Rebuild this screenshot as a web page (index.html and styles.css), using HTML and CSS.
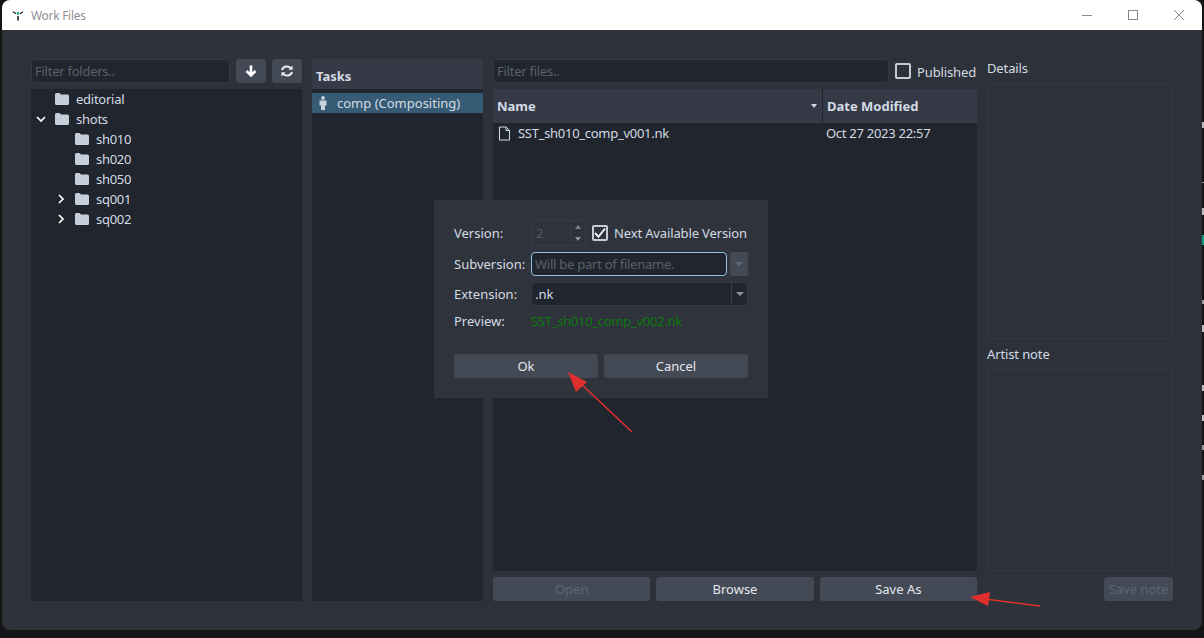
FILE: index.html
```html
<!DOCTYPE html>
<html lang="en">
<head>
<meta charset="utf-8">
<title>Work Files</title>
<link rel="stylesheet" href="styles.css">
</head>
<body>
<div class="window">
  <header class="titlebar">
    <svg class="logo" viewBox="0 0 12 12" width="12" height="12"><circle cx="6" cy="4.400" r="1.300" fill="#1ba58c"/><path d="M6 7v4.500" stroke="#222" stroke-width="1.600" fill="none"/><path d="M1 2.800l3 2M11 2.800l-3 2" stroke="#222" stroke-width="1.300" fill="none"/></svg>
    <span class="title">Work Files</span>
    <div class="winctl">
      <svg viewBox="0 0 12 12" width="12" height="12"><path d="M1 6.500h10" stroke="#8a8a8a" fill="none"/></svg>
      <svg viewBox="0 0 12 12" width="12" height="12"><rect x="1.500" y="1.500" width="9" height="9" stroke="#8a8a8a" fill="none"/></svg>
      <svg viewBox="0 0 12 12" width="12" height="12"><path d="M1 1l10 10M11 1L1 11" stroke="#8a8a8a" fill="none"/></svg>
    </div>
  </header>
  <main class="content">
    <section class="col-folders">
      <div class="row-top">
        <div class="input grow ph tight">Filter folders..</div>
        <button class="btn icon-btn"><svg viewBox="0 0 14 14" width="14" height="14"><path d="M7 1.500v10M2.500 7L7 11.500 11.500 7" stroke="#fff" stroke-width="2.600" fill="none"/></svg></button>
        <button class="btn icon-btn"><svg viewBox="0 0 14 14" width="14" height="14"><path d="M2 6a5 4.600 0 0 1 9-1.600M12 8a5 4.600 0 0 1-9 1.600" stroke="#e8eaee" stroke-width="2" fill="none"/><path d="M12.600 1.600v4.200H8.400zM1.400 12.400V8.200h4.200z" fill="#e8eaee"/></svg></button>
      </div>
      <div class="tree tight">
        <div class="node d0"><span class="arrow"></span><svg class="folder" viewBox="0 0 14 12" width="14" height="12"><use href="#fld"/></svg><span>editorial</span></div>
        <div class="node d0"><svg class="arrow" viewBox="0 0 12 12" width="12" height="12"><path d="M2 4l4 4 4-4" stroke="#fff" stroke-width="1.700" fill="none"/></svg><svg class="folder" viewBox="0 0 14 12" width="14" height="12"><use href="#fld"/></svg><span>shots</span></div>
        <div class="node d1"><span class="arrow"></span><svg class="folder" viewBox="0 0 14 12" width="14" height="12"><use href="#fld"/></svg><span class="num">sh010</span></div>
        <div class="node d1"><span class="arrow"></span><svg class="folder" viewBox="0 0 14 12" width="14" height="12"><use href="#fld"/></svg><span class="num">sh020</span></div>
        <div class="node d1"><span class="arrow"></span><svg class="folder" viewBox="0 0 14 12" width="14" height="12"><use href="#fld"/></svg><span class="num">sh050</span></div>
        <div class="node d1"><svg class="arrow" viewBox="0 0 12 12" width="12" height="12"><path d="M4 2l4 4-4 4" stroke="#fff" stroke-width="1.700" fill="none"/></svg><svg class="folder" viewBox="0 0 14 12" width="14" height="12"><use href="#fld"/></svg><span class="num">sq001</span></div>
        <div class="node d1"><svg class="arrow" viewBox="0 0 12 12" width="12" height="12"><path d="M4 2l4 4-4 4" stroke="#fff" stroke-width="1.700" fill="none"/></svg><svg class="folder" viewBox="0 0 14 12" width="14" height="12"><use href="#fld"/></svg><span class="num">sq002</span></div>
      </div>
    </section>

    <section class="col-tasks">
      <div class="tasks-head">Tasks</div>
      <div class="task-row">
        <svg viewBox="0 0 10 14" width="10" height="14"><circle cx="5" cy="2" r="1.900" fill="#c9d3dc"/><path d="M1.500 4.500h7v5H7V14H3V9.500H1.500z" fill="#c9d3dc"/></svg>
        <span>comp (Compositing)</span>
      </div>
    </section>

    <section class="col-files">
      <div class="row-top">
        <div class="input grow ph tight">Filter files..</div>
        <div class="published"><span class="check"></span><span class="tight-s">Published</span></div>
      </div>
      <div class="table">
        <div class="thead">
          <div class="th th-name">Name<span class="sort"></span></div>
          <div class="th th-date">Date Modified</div>
        </div>
        <div class="trow">
          <div class="td-name">
            <svg viewBox="0 0 13 15" width="13" height="15"><path d="M1.500 1h6.600L11.500 4.400V14h-10zM8 1v3.500h3.500" stroke="#cfe3df" fill="none"/></svg>
            <span class="num">SST_sh010_comp_v001.nk</span>
          </div>
          <div class="td-date num">Oct 27 2023 22:57</div>
        </div>
      </div>
      <div class="actions">
        <button class="btn off">Open</button>
        <button class="btn">Browse</button>
        <button class="btn">Save As</button>
      </div>
    </section>

    <section class="col-notes">
      <div class="lbl tight-s">Details</div>
      <div class="box box-details"></div>
      <div class="lbl lbl2 tight-s">Artist note</div>
      <div class="box box-note"></div>
      <div class="note-act"><button class="btn off save-note">Save note</button></div>
    </section>
  </main>

  <div class="dialog">
    <div class="form">
      <div class="flabel">Version:</div>
      <div class="fval version">
        <div class="spin"><span class="spin-v">2</span><span class="spin-btns"><i class="up"></i><i class="down"></i></span></div>
        <span class="check on"><svg viewBox="0 0 12 12" width="12" height="12"><path d="M1 6l3.500 3.800L11 1.500" stroke="#eef0f3" stroke-width="2" fill="none"/></svg></span>
        <span class="nav">Next Available Version</span>
      </div>
      <div class="flabel">Subversion:</div>
      <div class="fval sub">
        <div class="input focus grow ph tight">Will be part of filename.</div>
        <div class="combo-btn"><i class="down dim"></i></div>
      </div>
      <div class="flabel">Extension:</div>
      <div class="fval">
        <div class="input grow ext"><span class="grow">.nk</span><span class="ext-btn"><i class="down"></i></span></div>
      </div>
      <div class="flabel">Preview:</div>
      <div class="fval preview num">SST_sh010_comp_v002.nk</div>
    </div>
    <div class="dlg-btns">
      <button class="btn">Ok</button>
      <button class="btn">Cancel</button>
    </div>
  </div>

  <svg class="annot" viewBox="0 0 1204 638" width="1204" height="638">
    <path d="M632 432L578 381" stroke="#e0302e" stroke-width="1.600" fill="none"/>
    <path d="M568 372L587 382 576 392z" fill="#e0302e"/>
    <path d="M1040 606L985 599" stroke="#e0302e" stroke-width="1.600" fill="none"/>
    <path d="M970 597L990 592 988 606z" fill="#e0302e"/>
  </svg>
</div>
<svg class="defs" width="0" height="0"><defs><path id="fld" d="M0 1.500Q0 0 1.500 0h3L6 1.500h6.500Q14 1.500 14 3v7.500Q14 12 12.500 12h-11Q0 12 0 10.500z" fill="#c4cfdb"/></defs></svg>
</body>
</html>
```
FILE: styles.css
```css
* { box-sizing: border-box; }
html, body { margin: 0; height: 638px; overflow: hidden; }
body {
  position: relative;
  background-color: #141414;
  font-family: "Noto Sans", sans-serif;
  font-size: 13px;
  color: #d3dbe4;
  padding: 0 2px 8px;
}
/* slivers of the desktop showing past the window's right edge */
body::after {
  content: "";
  position: absolute;
  right: 0;
  top: 100px;
  width: 2px;
  height: 400px;
  background:
    linear-gradient(#17a085, #17a085) 0 135px / 2px 10px no-repeat,
    linear-gradient(#bbb, #bbb) 0 22px / 2px 6px no-repeat,
    linear-gradient(#999, #999) 0 82px / 2px 1px no-repeat,
    linear-gradient(#bbb, #bbb) 0 108px / 2px 7px no-repeat,
    linear-gradient(#999, #999) 0 200px / 2px 4px no-repeat,
    linear-gradient(#bbb, #bbb) 0 225px / 2px 7px no-repeat,
    linear-gradient(#bbb, #bbb) 0 285px / 2px 6px no-repeat,
    linear-gradient(#bbb, #bbb) 0 315px / 2px 6px no-repeat,
    linear-gradient(#999, #999) 0 345px / 2px 5px no-repeat,
    linear-gradient(#999, #999) 0 375px / 2px 5px no-repeat;
}
.defs { display: block; height: 0; }
.tight { letter-spacing: -0.25px; }
.tight-s { letter-spacing: -0.12px; }
.num { letter-spacing: -0.28px; }
.window {
  position: relative;
  height: 630px;
  background: #2d3139;
  border-radius: 8px;
  display: flex;
  flex-direction: column;
  overflow: hidden;
}
.titlebar {
  height: 30px;
  flex: none;
  background: #fff;
  display: flex;
  align-items: center;
  padding-left: 10px;
}
.logo { margin-right: 7px; }
.title { color: #8f8f96; font-size: 12px; letter-spacing: -0.3px; }
.winctl {
  margin-left: auto;
  display: flex;
  gap: 34px;
  padding-right: 17px;
}
.content {
  flex: 1;
  display: flex;
  gap: 10px;
  padding: 29px;
  min-height: 0;
}
.col-folders, .col-files, .col-notes, .col-tasks { display: flex; flex-direction: column; min-height: 0; }
.col-folders { width: 271px; }
.col-tasks { width: 171px; background: #21252d; }
.col-files { width: 484px; }
.col-notes { width: 186px; }
.row-top { display: flex; gap: 6px; height: 24px; flex: none; margin-bottom: 6px; }
.grow { flex: 1; min-width: 0; }
.input {
  background: #21252d;
  border: 1px solid #343944;
  border-radius: 4px;
  height: 24px;
  line-height: 22px;
  padding: 0 3px;
}
.ph { color: #5b616c; }
.btn {
  font: inherit;
  color: #e3e7ec;
  background: #434a56;
  border: 0;
  border-radius: 3px;
  height: 24px;
  padding: 0;
  display: flex;
  align-items: center;
  justify-content: center;
}
.icon-btn { width: 30px; flex: none; }
.btn.off { color: #5f6570; }
.tree { flex: 1; background: #21252d; }
.node { display: flex; align-items: center; height: 20px; }
.node .arrow { width: 12px; height: 12px; flex: none; margin-left: 4px; margin-right: 8px; }
.node .folder { flex: none; margin-right: 7px; }
.node.d1 { padding-left: 20px; }
.tasks-head {
  height: 30px;
  background: #363a46;
  font-weight: 700;
  padding: 7px 0 0 4px;
  line-height: 20px;
}
.task-row {
  height: 20px;
  margin-top: 4px;
  background: #375b74;
  display: flex;
  align-items: center;
  padding-left: 6px;
  gap: 9px;
}
.published { display: flex; align-items: center; gap: 6px; width: 82px; flex: none; padding-top: 2px; white-space: nowrap; }
.check {
  width: 16px;
  height: 16px;
  flex: none;
  border: 2px solid #c5ccd4;
  border-radius: 2px;
  display: block;
  margin-top: -3px;
}
.check.on { margin: 0; display: flex; align-items: center; justify-content: center; }
.table { flex: 1; background: #21252d; display: flex; flex-direction: column; min-height: 0; }
.thead { height: 34px; background: #363a46; display: flex; font-weight: 700; flex: none; }
.th { display: flex; align-items: center; padding-left: 4px; }
.th-name { width: 330px; position: relative; border-right: 1px solid #21252d; }
.sort {
  position: absolute; right: 5px; top: 15px;
  border-left: 3.5px solid transparent; border-right: 3.5px solid transparent; border-top: 4px solid #d3dbe4;
}
.th-date { flex: 1; }
.trow { display: flex; height: 20px; align-items: center; }
.td-name { width: 330px; display: flex; align-items: center; gap: 7px; padding-left: 5px; }
.td-date { padding-left: 3px; }
.actions { display: grid; grid-template-columns: repeat(3, 1fr); gap: 6px; margin-top: 6px; flex: none; }
.lbl { height: 24px; line-height: 18px; flex: none; }
.lbl2 { margin-top: 6px; }
.box {
  border: 1px solid #353a45;
  border-radius: 4px;
  background: #2d3139;
}
.box-details { flex: 256 1 0; }
.box-note { flex: 202 1 0; }
.note-act { display: flex; justify-content: flex-end; margin-top: 6px; flex: none; }
.save-note { width: 69px; }

.dialog {
  position: absolute;
  left: 432px;
  top: 200px;
  width: 334px;
  height: 198px;
  background: #2f333c;
  padding: 20px;
  display: flex;
  flex-direction: column;
}
.form {
  display: grid;
  grid-template-columns: 77px 1fr;
  grid-template-rows: 26px 24px 24px 18px;
  row-gap: 6px;
  align-items: center;
}
.flabel { white-space: nowrap; }
.fval { display: flex; align-items: center; gap: 3px; min-width: 0; }
.version { gap: 6px; }
.spin {
  width: 55px; height: 26px;
  border: 1px solid #383d48;
  border-radius: 4px;
  display: flex;
  color: #555b66;
  align-items: center;
  padding-left: 4px;
}
.spin-v { flex: 1; }
.spin-btns { width: 15px; height: 24px; display: flex; flex-direction: column; border-left: 1px solid #383d48; align-items: center; justify-content: space-around; }
.up, .down { display: block; width: 0; height: 0; border-left: 4px solid transparent; border-right: 4px solid transparent; }
.up { border-bottom: 4px solid #7d838d; }
.down { border-top: 4px solid #8c929c; }
.spin-btns .up, .spin-btns .down { border-left-width: 3px; border-right-width: 3px; }
.nav { white-space: nowrap; letter-spacing: -0.14px; }
.focus { border: 1px solid #8fc3df; }
.combo-btn { width: 18px; height: 24px; background: #434a56; border-radius: 3px; display: flex; align-items: center; justify-content: center; flex: none; }
.down.dim { border-top-color: #626873; }
.ext { display: flex; padding-right: 0; color: #d3dbe4; }
.ext-btn { width: 16px; height: 22px; border-left: 1px solid #383d48; display: flex; align-items: center; justify-content: center; }
.preview { color: #0b7a0b; white-space: nowrap; }
.dlg-btns { display: grid; grid-template-columns: 1fr 1fr; gap: 6px; margin-top: auto; }
.annot { position: absolute; left: -2px; top: 0; pointer-events: none; }
```
